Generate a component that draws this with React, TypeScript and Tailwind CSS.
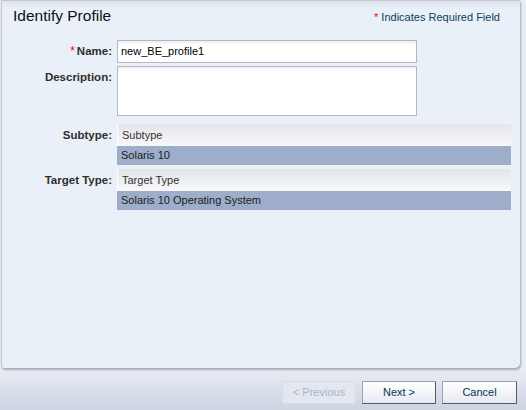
import React from 'react';

const font = { fontFamily: '"Liberation Sans", Arial, sans-serif' };

function Label({ text, required }: { text: string; required?: boolean }) {
  return (
    <div className="w-[110px] shrink-0 text-right text-[11.5px] font-bold text-[#2e2e2e] leading-[13px]">
      {required && <span className="text-[#f00] font-normal text-[12px] mr-[2px]">*</span>}
      {text}
    </div>
  );
}

function ChoiceList({ header, value }: { header: string; value: string }) {
  return (
    <div className="w-[394px] text-[11px]">
      <div className="h-[22px] flex items-center pl-[4px] border-l border-white bg-gradient-to-b from-[#e3e5ea] to-[#f8f8f9] text-[#333]">
        {header}
      </div>
      <div className="h-[19px] flex items-center pl-[4px] bg-[#9dadca] text-[#1c1c1c]">{value}</div>
    </div>
  );
}

export default function App() {
  return (
    <div
      style={font}
      className="w-[526px] h-[410px] overflow-hidden bg-gradient-to-b from-[#e8ecf4] from-[90%] to-[#cdd4e2] flex flex-col"
    >
      <div className="ml-[1px] w-[519px] h-[368px] shrink-0 rounded-br-[5px] rounded-bl-[3px] bg-[#e9f0f8] border-l border-t border-[#c2c7d3] shadow-[1px_2px_2px_rgba(80,90,110,0.45)]">
        <div className="flex items-center justify-between pl-[11px] pr-[20px] pt-[2px] h-[28px] bg-gradient-to-b from-[#dfe4ec] to-[#e9f0f8] to-[30%]">
          <span className="text-[15.5px] text-[#111] leading-[20px]">Identify Profile</span>
          <span className="text-[11px] text-[#06405c] leading-[14px] pt-[2px]">
            <span className="text-[#f00]">*</span> Indicates Required Field
          </span>
        </div>

        <div className="flex flex-col pt-[11px]">
          <div className="flex gap-[5px]">
            <div className="pt-[5px]">
              <Label text="Name:" required />
            </div>
            <div className="w-[300px] h-[23px] border border-[#b3b7cb] bg-white shadow-[inset_0_3px_3px_-1px_rgba(0,0,0,0.07)] text-[11px] text-black flex items-center pl-[3px]">
              new_BE_profile1
            </div>
          </div>

          <div className="flex gap-[5px] mt-[3px]">
            <div className="pt-[5px]">
              <Label text="Description:" />
            </div>
            <div className="w-[300px] h-[50px] border border-[#b3b7cb] bg-white shadow-[inset_0_3px_3px_-1px_rgba(0,0,0,0.07)]" />
          </div>

          <div className="flex gap-[5px] mt-[8px]">
            <div className="pt-[5px]">
              <Label text="Subtype:" />
            </div>
            <ChoiceList header="Subtype" value="Solaris 10" />
          </div>

          <div className="flex gap-[5px] mt-[4px]">
            <div className="pt-[5px]">
              <Label text="Target Type:" />
            </div>
            <ChoiceList header="Target Type" value="Solaris 10 Operating System" />
          </div>
        </div>
      </div>

      <div className="flex justify-end gap-[6px] pr-[9px] pt-[13px] text-[11px]">
        <button className="w-[74px] h-[23px] border border-[#d6dbe5] bg-[#e3e8f0] text-[#aab4c6]">&lt; Previous</button>
        <button className="w-[74px] h-[23px] border border-[#9aa2b0] border-r-[#555b66] border-b-[#555b66] bg-gradient-to-b from-white to-[#e4e9f2] text-[#0a3550]">
          Next &gt;
        </button>
        <button className="w-[75px] h-[23px] border border-[#9aa2b0] border-r-[#555b66] border-b-[#555b66] bg-gradient-to-b from-white to-[#e4e9f2] text-[#0a3550]">
          Cancel
        </button>
      </div>
    </div>
  );
}
